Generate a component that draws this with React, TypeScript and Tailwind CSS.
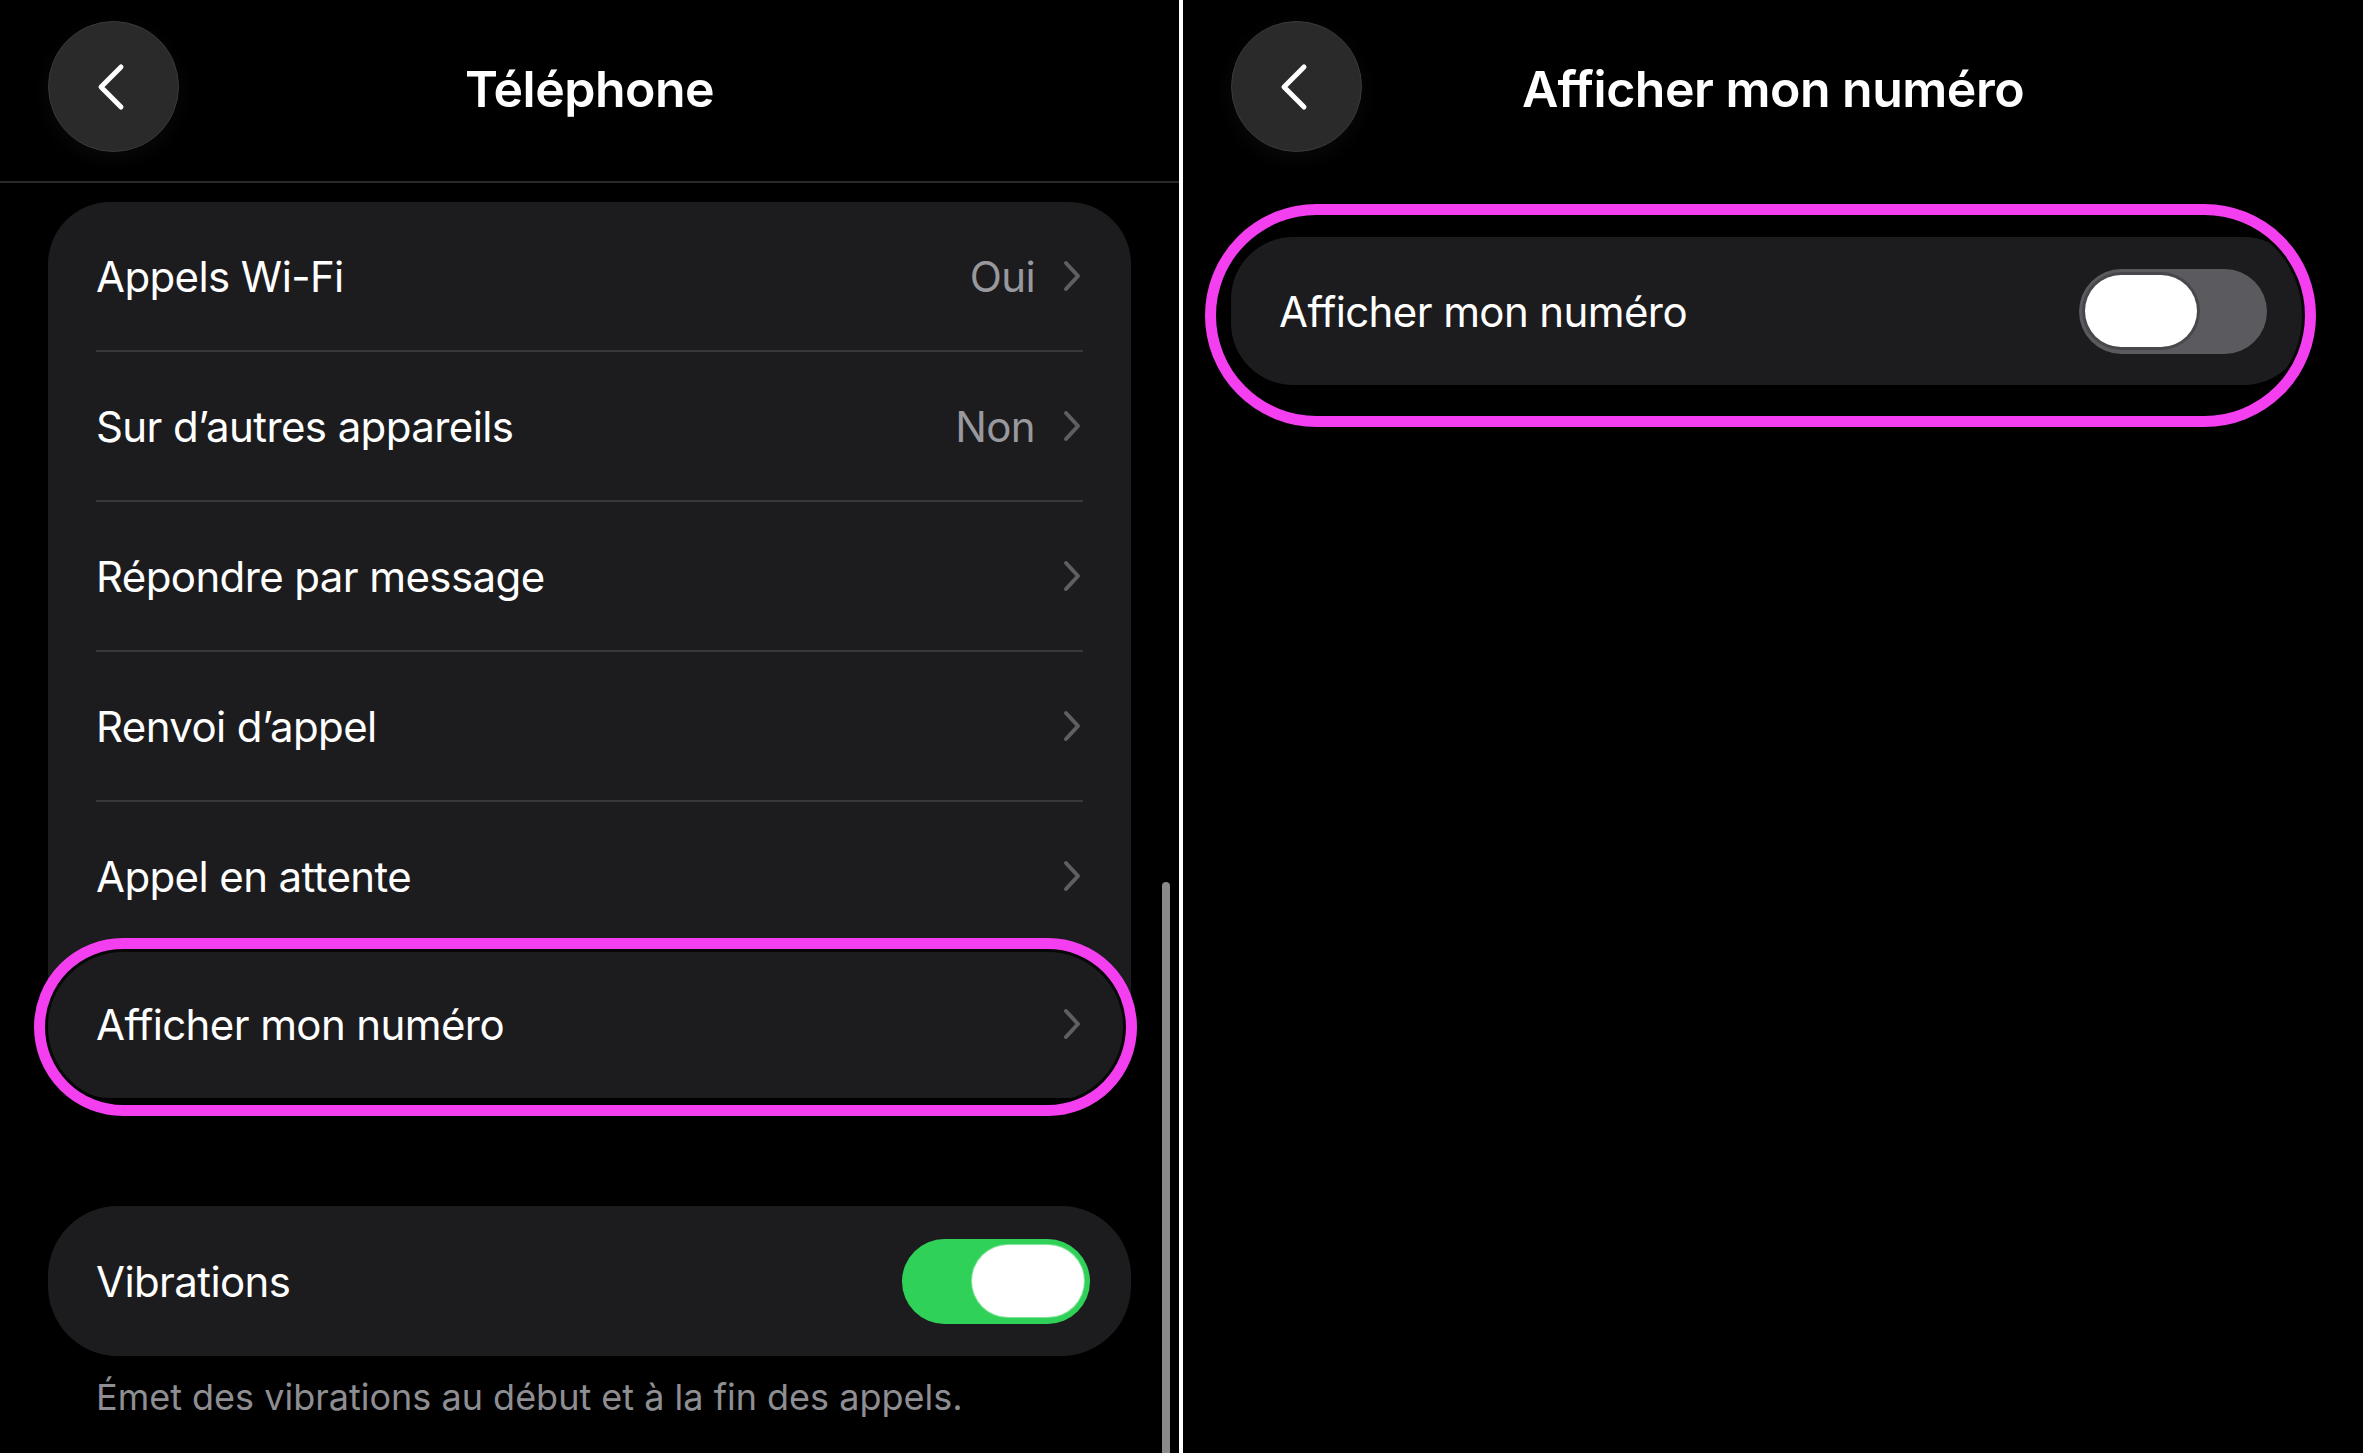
import React from 'react';

type Row = {
  label: string;
  value?: string;
};

const rows: Row[] = [
  { label: 'Appels Wi-Fi', value: 'Oui' },
  { label: 'Sur d’autres appareils', value: 'Non' },
  { label: 'Répondre par message' },
  { label: 'Renvoi d’appel' },
  { label: 'Appel en attente' },
];

function BackButton() {
  return (
    <button className="flex h-[131px] w-[131px] items-center justify-center rounded-full border border-[#3a3a3c] bg-[#2a2a2b] shadow-[0_6px_20px_rgba(255,255,255,0.04)]">
      <svg width="30" height="48" viewBox="0 0 30 48" className="-ml-[6px]">
        <polyline
          points="25,4 5,24 25,44"
          fill="none"
          stroke="#ffffff"
          strokeWidth="5"
          strokeLinecap="round"
          strokeLinejoin="round"
        />
      </svg>
    </button>
  );
}

function Chevron() {
  return (
    <svg width="18" height="32" viewBox="0 0 18 32">
      <polyline
        points="3,3 15,16 3,29"
        fill="none"
        stroke="#5e5e63"
        strokeWidth="4"
        strokeLinecap="round"
        strokeLinejoin="round"
      />
    </svg>
  );
}

function Toggle({ on }: { on: boolean }) {
  return (
    <div
      className={`flex h-[85px] w-[188px] items-center rounded-full p-[6px] ${
        on ? 'justify-end bg-[#30d158]' : 'justify-start bg-[#5b5a5f]'
      }`}
    >
      <div
        className={`h-[72px] w-[112px] rounded-full bg-white ${
          on ? 'shadow-[0_0_0_1px_rgba(255,255,255,0.4)]' : 'shadow-[0_0_0_3px_#48484c]'
        }`}
      />
    </div>
  );
}

// Hand-drawn style highlight ring around a row
function Highlight({ className }: { className: string }) {
  return (
    <div
      className={`pointer-events-none absolute rounded-full border-[11px] border-[#f43ff1] shadow-[inset_0_0_0_3px_rgba(0,0,0,0.75)] ${className}`}
    />
  );
}

function Header({ title, divider }: { title: string; divider?: boolean }) {
  return (
    <div className={divider ? 'border-b-2 border-[#2a2a2c]' : ''}>
      <div className="grid h-[181px] grid-cols-[200px_1fr_200px] items-center pb-[8px]">
        <div className="pl-12">
          <BackButton />
        </div>
        <h1 className="mt-[6px] text-center text-[50px] font-semibold tracking-[-0.5px] text-white">
          {title}
        </h1>
        <div />
      </div>
    </div>
  );
}

export default function App() {
  return (
    <div className="flex h-[1453px] w-[2363px] overflow-hidden bg-black font-['Inter',sans-serif] text-white">
      {/* Left screen: Téléphone settings */}
      <div className="relative w-[1179px] shrink-0">
        <Header title="Téléphone" divider />

        <div className="px-12 pt-[19px]">
          <div className="relative rounded-[62px] bg-[#1c1c1e]">
            {rows.map((row) => (
              <div key={row.label}>
                <div className="flex h-[148px] items-center justify-between pl-12 pr-[50px]">
                  <span className="text-[42px] tracking-[-0.6px]">{row.label}</span>
                  <div className="flex items-center gap-[28px]">
                    {row.value && (
                      <span className="text-[42px] tracking-[-0.6px] text-[#98989d]">
                        {row.value}
                      </span>
                    )}
                    <Chevron />
                  </div>
                </div>
                {row.label !== 'Appel en attente' && (
                  <div className="mx-12 h-[2px] bg-[#38383a]" />
                )}
              </div>
            ))}

            <div className="relative flex h-[148px] items-center justify-between pl-12 pr-[50px]">
              <span className="text-[42px] tracking-[-0.6px]">Afficher mon numéro</span>
              <Chevron />
              <Highlight className="-bottom-[18px] -left-[14px] -right-[6px] -top-[12px]" />
            </div>
          </div>

          <div className="mt-[108px] flex h-[150px] items-center justify-between rounded-[70px] bg-[#1c1c1e] pl-12 pr-[41px]">
            <span className="text-[42px] tracking-[-0.6px]">Vibrations</span>
            <Toggle on />
          </div>

          <p className="mt-[20px] pl-12 text-[36px] leading-[42px] tracking-[0px] text-[#8e8e93]">
            Émet des vibrations au début et à la fin des appels.
          </p>
        </div>

        {/* scroll indicator */}
        <div className="absolute right-[9px] top-[882px] h-[620px] w-[8px] rounded-full bg-[#8a8a8a]" />
      </div>

      <div className="w-[4px] shrink-0 bg-white" />

      {/* Right screen: Afficher mon numéro */}
      <div className="flex-1">
        <Header title="Afficher mon numéro" />

        <div className="pl-12 pr-[57px] pt-[56px]">
          <div className="relative flex h-[148px] items-center justify-between rounded-[62px] bg-[#1c1c1e] pl-12 pr-[39px]">
            <span className="text-[42px] tracking-[-0.6px]">Afficher mon numéro</span>
            <Toggle on={false} />
            <Highlight className="-bottom-[42px] -left-[26px] -right-[10px] -top-[33px]" />
          </div>
        </div>
      </div>
    </div>
  );
}
